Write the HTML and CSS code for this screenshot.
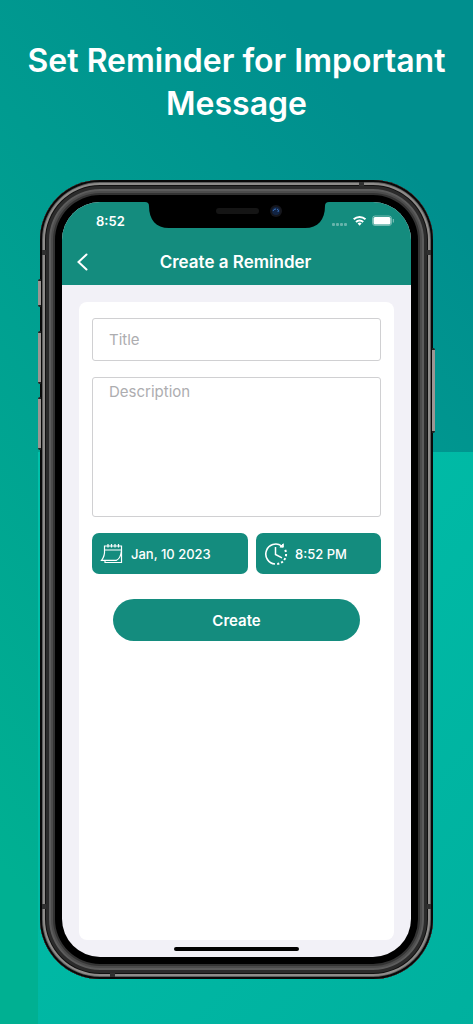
FILE: index.html
```
<!DOCTYPE html>
<html lang="en">
<head>
    <meta charset="UTF-8">
    <meta name="viewport" content="width=device-width, initial-scale=1.0">
    <title>Create a Reminder</title>
    <link rel="stylesheet" href="styles.css">
</head>
<body>
    <h1 class="headline">Set Reminder for Important Message</h1>
    <div class="phone">
        <span class="side-button mute"></span>
        <span class="side-button volume-up"></span>
        <span class="side-button volume-down"></span>
        <span class="side-button power"></span>
        <span class="antenna antenna-top"></span>
        <span class="antenna antenna-bottom"></span>
        <span class="antenna antenna-side left high"></span>
        <span class="antenna antenna-side right high"></span>
        <span class="antenna antenna-side left low"></span>
        <span class="antenna antenna-side right low"></span>
        <div class="screen">
            <svg class="notch" viewBox="0 0 184 27" width="184" height="27">
                <path d="M0 0H184Q180 0 180 4C180 18 173 26 160 26H24C11 26 4 18 4 4Q4 0 0 0Z"/>
                <rect x="71" y="6" width="43" height="6" rx="3" fill="#151515"/>
                <circle cx="131" cy="9" r="6" fill="#15161c"/>
                <circle cx="131" cy="9" r="4" fill="#122444"/>
                <path d="M128 9a3 3 0 0 1 3-2M132 7a2 2 0 0 1 1 3" fill="none" stroke="#3a72ba"/>
            </svg>
            <header class="top">
                <div class="status">
                    <span class="time">8:52</span>
                    <svg width="64" height="12" viewBox="0 0 64 12">
                        <g fill="#fff" opacity=".35">
                            <rect x="1" y="8" width="3" height="3" rx="1"/>
                            <rect x="5" y="8" width="3" height="3" rx="1"/>
                            <rect x="9" y="8" width="3" height="3" rx="1"/>
                            <rect x="13" y="8" width="3" height="3" rx="1"/>
                        </g>
                        <g fill="none" stroke="#fff" stroke-width="2">
                            <path d="M22.7 4.3a8.6 8.6 0 0 1 11.8 0"/>
                            <path d="M25 7a5.3 5.3 0 0 1 7.2 0"/>
                        </g>
                        <path d="M26.6 8.5a3 3 0 0 1 4 0l-2 2.2Z" fill="#fff"/>
                        <rect x="41.5" y="1" width="19" height="9.5" rx="2.5" fill="none" stroke="#fff" opacity=".4"/>
                        <rect x="42.5" y="2" width="17" height="7.5" rx="1.5" fill="#fff"/>
                        <path d="M62.3 4v3.500" stroke="#fff" opacity=".5"/>
                    </svg>
                </div>
                <nav class="navbar">
                    <button type="button" class="back" aria-label="Back">
                        <svg width="12" height="18" viewBox="0 0 12 18"><path d="M10.500 1.500 2.500 9 10.500 16.500" fill="none" stroke="#fff" stroke-width="2" stroke-linecap="round"/></svg>
                    </button>
                    <h2>Create a Reminder</h2>
                </nav>
            </header>
            <form class="card">
                <input type="text" class="field" placeholder="Title" aria-label="Title">
                <textarea class="field description" placeholder="Description" aria-label="Description"></textarea>
                <div class="when">
                    <button type="button">
                        <svg width="24" height="24" viewBox="0 0 24 24" fill="none" stroke="#fff" stroke-width="1.2">
                            <path d="M4.500 8V4H21.500V20.500H5V18.500"/>
                            <path d="M4.500 8H21.500M4.500 8Q5 14 1.500 18.300H16.500Q20.500 16.500 21.500 9"/>
                            <path d="M8 2V5.500M11.500 2V5.500M15 2V5.500M18.500 2V5.500"/>
                        </svg>
                        Jan, 10 2023
                    </button>
                    <button type="button">
                        <svg width="24" height="24" viewBox="0 0 24 24" fill="none" stroke="#fff">
                            <path d="M17.500 3.800A10 10 0 1 0 11 22" stroke-width="1.600"/>
                            <path d="M19.300 1.800V5.200L15.900 5Z" fill="#fff" stroke-width="1"/>
                            <path d="M13.200 22A10 10 0 0 0 21 7.500" stroke-width="2" stroke-dasharray="2.200 1.900"/>
                            <path d="M11.500 5V12.500L18 15.800" stroke-width="1.500"/>
                        </svg>
                        8:52 PM
                    </button>
                </div>
                <button type="submit" class="create">Create</button>
            </form>
            <div class="home-bar"></div>
        </div>
    </div>
</body>
</html>
```
FILE: styles.css
```
* {
    box-sizing: border-box;
}
body {
    margin: 0;
    min-height: 100vh;
    padding: 39px 0 45px;
    font-family: Inter, "Liberation Sans", sans-serif;
    background:
        linear-gradient(135deg, #00c0aa, #00a999) 38px 452px no-repeat,
        linear-gradient(50deg, #00b092 10%, #00a191 45%, #008f8e 85%) no-repeat;
}
.headline {
    margin: 0 16px 55px;
    font-size: 32px;
    font-weight: 600;
    line-height: 43px;
    text-align: center;
    color: white;
}
.phone {
    position: relative;
    margin: 0 40px;
    padding: 22px;
    border-radius: 60px;
    background-color: black;
    box-shadow:
        inset 0 0 0 2px #080808,
        inset 0 0 0 3px #5c5c5c,
        inset 0 0 0 5px #8e8c8a,
        inset 0 0 0 6px #111111,
        inset 0 0 0 9px #2b2b2b,
        inset 0 0 0 11px #5c5c5c,
        inset 0 0 0 13px #4c4c4c,
        inset 0 0 0 15px #333333;
}
.side-button {
    position: absolute;
    left: -2px;
    width: 3px;
    border: solid #222;
    border-width: 2px 0;
    border-radius: 2px 0 0 2px;
    background-color: #9b9693;
}
.mute {
    top: 99px;
    height: 28px;
}
.volume-up {
    top: 151px;
    height: 53px;
}
.volume-down {
    top: 217px;
    height: 53px;
}
.power {
    top: 168px;
    right: -2px;
    left: auto;
    height: 85px;
    border-radius: 0 2px 2px 0;
}
.antenna {
    position: absolute;
    width: 5px;
    height: 4px;
    background-color: #303030;
}
.antenna-top {
    top: 2px;
    right: 69px;
}
.antenna-bottom {
    bottom: 2px;
    left: 70px;
}
.antenna-side {
    width: 4px;
    height: 5px;
}
.left {
    left: 2px;
}
.right {
    right: 2px;
}
.high {
    top: 70px;
}
.low {
    bottom: 70px;
}
.screen {
    position: relative;
    overflow: hidden;
    padding-bottom: 6px;
    border-radius: 38px;
    background-color: #f2f1f7;
}
.notch {
    position: absolute;
    top: 0;
    left: 50%;
    transform: translateX(-50%);
}
.top {
    padding: 8px 16px 0 14px;
    height: 83px;
    color: white;
    background-color: #148c7e;
}
.status {
    display: flex;
    align-items: center;
    justify-content: space-between;
    height: 22px;
    padding-left: 20px;
}
.time {
    font-size: 13px;
    font-weight: 600;
}
.navbar {
    display: grid;
    grid-template-columns: 20px 1fr 20px;
    align-items: center;
    height: 60px;
}
.back {
    display: flex;
    padding: 0;
    border: none;
    background: none;
}
.navbar h2 {
    margin: 0;
    font-size: 17px;
    font-weight: 600;
    text-align: center;
}
.card {
    display: flex;
    flex-direction: column;
    gap: 16px;
    min-height: 638px;
    margin: 17px 17px 7px;
    padding: 16px 13px;
    border-radius: 8px;
    background-color: white;
}
.field {
    width: 100%;
    height: 43px;
    padding: 0 16px;
    border: 1px solid #d0d0d2;
    border-radius: 3px;
    font: 15px Inter, sans-serif;
}
.field::placeholder {
    color: #adadb0;
}
.description {
    height: 140px;
    padding-top: 4px;
    resize: none;
}
.when {
    display: grid;
    grid-template-columns: 5fr 4fr;
    gap: 8px;
}
.when button {
    display: flex;
    align-items: center;
    gap: 7px;
    height: 41px;
    padding: 0 8px;
    border: none;
    border-radius: 7px;
    font: 500 13px Inter, sans-serif;
    color: white;
    background-color: #148c7e;
}
.create {
    height: 42px;
    margin: 9px 21px 0;
    border: none;
    border-radius: 21px;
    font: 600 15px Inter, sans-serif;
    color: white;
    background-color: #148c7e;
}
.home-bar {
    width: 36%;
    height: 4px;
    margin: 0 auto;
    border-radius: 2px;
    background-color: black;
}
```
